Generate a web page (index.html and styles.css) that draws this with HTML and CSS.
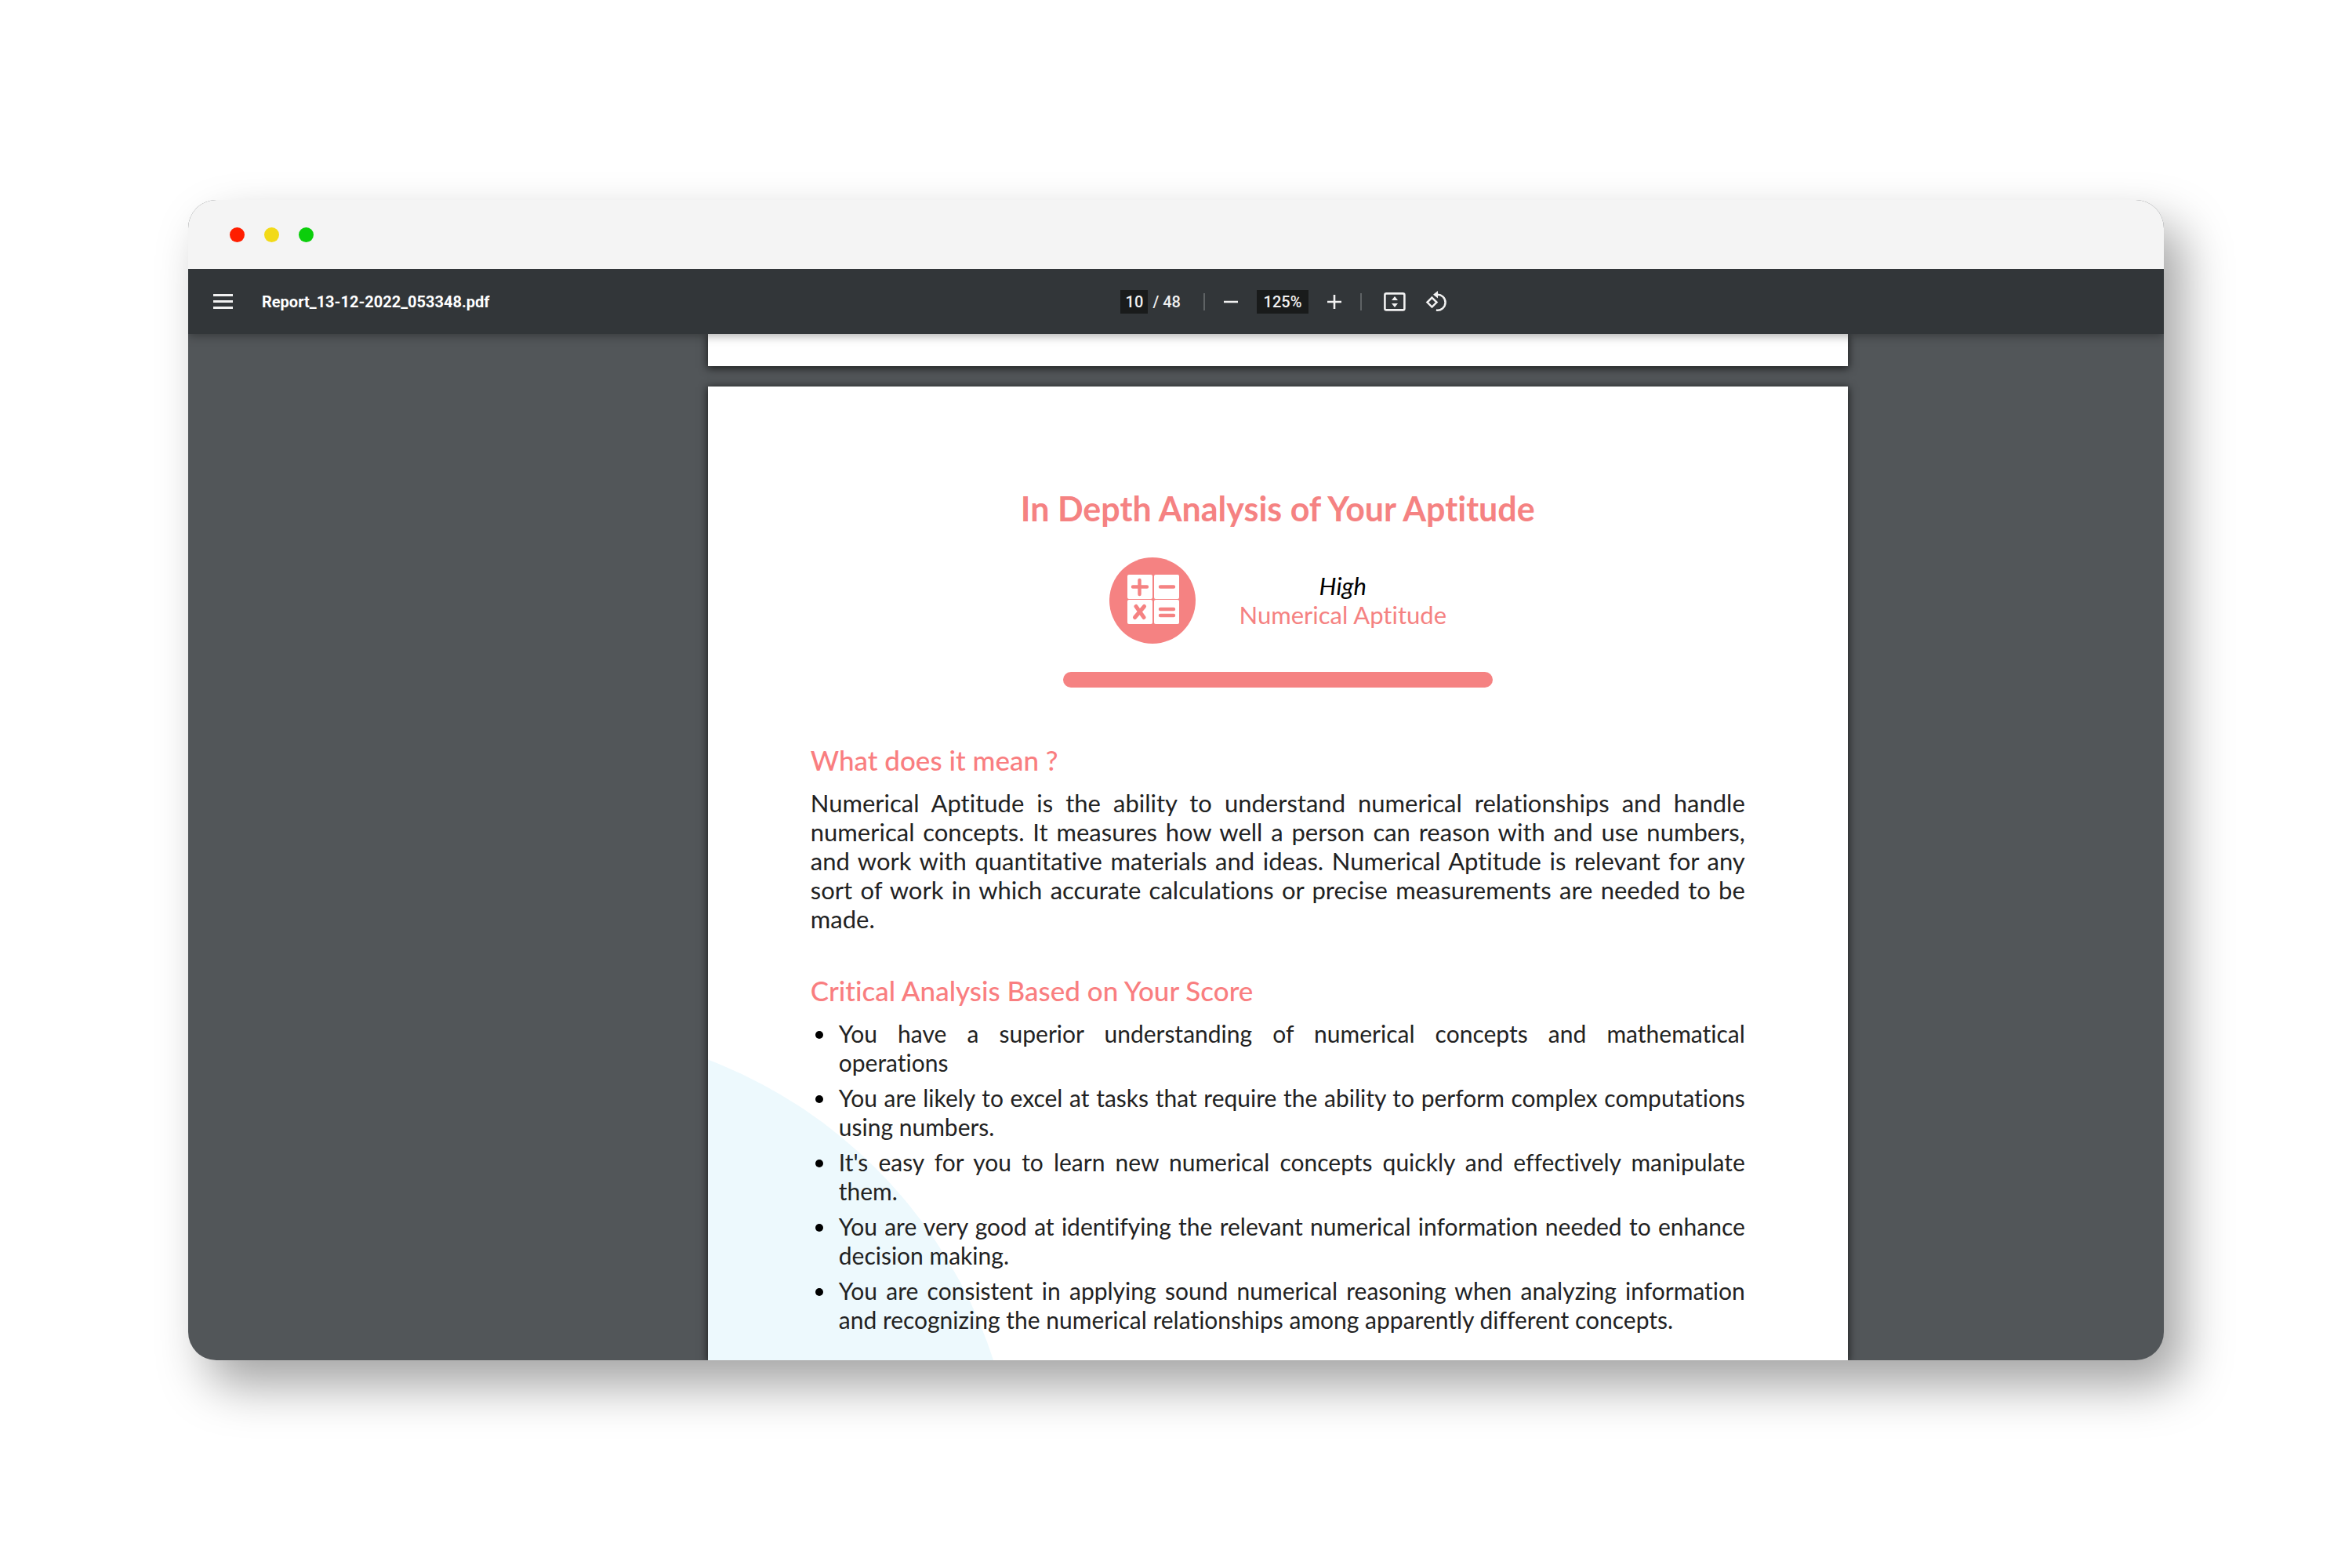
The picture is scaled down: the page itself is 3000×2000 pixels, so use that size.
FILE: index.html
```
<!DOCTYPE html>
<html lang="en">
<head>
<meta charset="utf-8">
<meta name="viewport" content="width=device-width, initial-scale=1">
<title>Report_13-12-2022_053348.pdf</title>
<link rel="stylesheet" href="styles.css">
</head>
<body>
<div class="window">
  <div class="titlebar">
    <span class="dot dot-red"></span>
    <span class="dot dot-yellow"></span>
    <span class="dot dot-green"></span>
  </div>

  <header class="toolbar">
    <div class="file">
      <button class="tool" type="button" aria-label="Menu">
        <svg width="25" height="19" viewBox="0 0 25 19"><path d="M0 1.5h25M0 9.5h25M0 17.5h25" stroke="currentColor" stroke-width="3"/></svg>
      </button>
      <span class="filename">Report_13-12-2022_053348.pdf</span>
    </div>
    <div class="controls">
      <div class="pager">
        <input class="field page-field" type="text" value="10" aria-label="Page number">
        <span>/ 48</span>
      </div>
      <span class="divider"></span>
      <button class="tool" type="button" aria-label="Zoom out">
        <svg width="18" height="18" viewBox="0 0 18 18"><path d="M0 9h18" stroke="currentColor" stroke-width="2.6"/></svg>
      </button>
      <input class="field zoom-field" type="text" value="125%" aria-label="Zoom level">
      <button class="tool" type="button" aria-label="Zoom in">
        <svg width="18" height="18" viewBox="0 0 18 18"><path d="M0 9h18M9 0v18" stroke="currentColor" stroke-width="2.6"/></svg>
      </button>
      <span class="divider"></span>
      <div class="view-tools">
        <button class="tool" type="button" aria-label="Fit to page">
          <svg width="28" height="24" viewBox="0 0 28 24"><rect x="1.4" y="1.4" width="25" height="21" rx="2" fill="none" stroke="currentColor" stroke-width="2.6"/><path d="M14 5l4 5h-8zM14 19l4-5h-8z" fill="currentColor"/></svg>
        </button>
        <button class="tool" type="button" aria-label="Rotate counterclockwise">
          <svg width="27" height="27" viewBox="0 0 27 27"><path d="M8.500 8.600l6 6-6 6-6-6z" fill="none" stroke="currentColor" stroke-width="2.5"/><path d="M14.500 4.800a10 10 0 1 1-.6 19.800" fill="none" stroke="currentColor" stroke-width="2.5"/><path d="M16 0v9.600L10 4.800z" fill="currentColor"/></svg>
        </button>
      </div>
    </div>
  </header>

  <main class="viewer">
    <div class="sheet sheet-previous"></div>
    <article class="sheet report">
      <h1 class="report-title">In Depth Analysis of Your Aptitude</h1>
      <div class="score">
        <svg class="score-icon" width="110" height="110" viewBox="0 0 110 110" aria-hidden="true">
          <circle cx="55" cy="55" r="55" fill="#f58282"/>
          <g fill="#fff">
            <rect x="23" y="22" width="32" height="31" rx="2"/>
            <rect x="57" y="22" width="32" height="31" rx="2"/>
            <rect x="23" y="54" width="32" height="31" rx="2"/>
            <rect x="57" y="54" width="32" height="31" rx="2"/>
          </g>
          <g stroke="#f58282" stroke-width="4.4" stroke-linecap="round">
            <path d="M30 37.500h18M38.500 29v18M65 37.500h17M65 66h17M65 74h17"/>
            <path d="M34 62.500l10 14M44.500 62.500l-12 14" stroke-width="5"/>
          </g>
        </svg>
        <div class="score-text">
          <em class="score-level">High</em>
          <span class="score-name">Numerical Aptitude</span>
        </div>
      </div>
      <div class="score-bar"></div>

      <section class="section">
        <h2>What does it mean ?</h2>
        <p>Numerical Aptitude is the ability to understand numerical relationships and handle numerical concepts. It measures how well a person can reason with and use numbers, and work with quantitative materials and ideas. Numerical Aptitude is relevant for any sort of work in which accurate calculations or precise measurements are needed to be made.</p>
      </section>

      <section class="section">
        <h2>Critical Analysis Based on Your Score</h2>
        <ul>
          <li><span><span class="full-line">You have a superior understanding of numerical concepts and mathematical</span> operations</span></li>
          <li><span>You are likely to excel at tasks that require the ability to perform complex computations using numbers.</span></li>
          <li><span>It's easy for you to learn new numerical concepts quickly and effectively manipulate them.</span></li>
          <li><span>You are very good at identifying the relevant numerical information needed to enhance decision making.</span></li>
          <li><span>You are consistent in applying sound numerical reasoning when analyzing information and recognizing the numerical relationships among apparently different concepts.</span></li>
        </ul>
      </section>
    </article>
  </main>
</div>
</body>
</html>
```
FILE: styles.css
```
* {
  box-sizing: border-box;
}

body {
  margin: 0;
  padding: 255px 8%;
  background: #fff;
  font-family: Lato, "Open Sans", sans-serif;
  font-variant-ligatures: none;
}

.window {
  border-radius: 36px;
  background: #525659;
  box-shadow: 24px 32px 62px rgba(0, 0, 0, .36);
  overflow: hidden;
}

/* Window title bar */

.titlebar {
  position: relative;
  z-index: 2;
  display: flex;
  align-items: center;
  gap: 25px;
  height: 88px;
  padding: 0 53px;
  background: #f4f4f4;
}

.dot {
  width: 19px;
  height: 19px;
  border-radius: 50%;
}

.dot-red { background: #ff1e00; }
.dot-yellow { background: #f2da18; }
.dot-green { background: #0bce0b; }

/* PDF toolbar */

.toolbar {
  position: relative;
  z-index: 1;
  display: grid;
  grid-template-columns: 47.2% 1fr;
  align-items: center;
  height: 83px;
  background: #323639;
  box-shadow: 0 2px 12px rgba(0, 0, 0, .35);
  color: #f1f1f1;
  font: 500 20px/28px Roboto, sans-serif;
}

.file {
  display: flex;
  align-items: center;
  gap: 37px;
  padding-left: 32px;
}

.filename {
  color: #fff;
  font-weight: 700;
}

.tool {
  display: block;
  padding: 0;
  border: 0;
  background: none;
  color: #f1f1f1;
}

.tool svg {
  display: block;
}

.controls {
  display: flex;
  align-items: center;
  gap: 24px;
}

.pager {
  display: flex;
  align-items: center;
  gap: 6px;
  padding-right: 5px;
}

.field {
  height: 30px;
  padding: 0;
  border: 0;
  background: #191b1b;
  color: #f1f1f1;
  font: inherit;
  text-align: center;
}

.page-field { width: 35px; }
.zoom-field { width: 66px; }

.divider {
  width: 2px;
  height: 22px;
  background: #5f6365;
}

.view-tools {
  display: flex;
  align-items: center;
  gap: 25px;
  padding-left: 4px;
}

/* Document */

.viewer {
  display: grid;
  grid-template-columns: 26.3% 1fr 16%;
  row-gap: 26px;
}

.sheet {
  grid-column: 2;
  background: #fff;
  box-shadow: 0 2px 10px 1px rgba(0, 0, 0, .65);
}

.sheet-previous {
  height: 41px;
}

.report {
  position: relative;
  display: flex;
  flex-direction: column;
  padding: 130px 131px 33px;
  overflow: hidden;
  color: #222;
  font-size: 31px;
  line-height: 37px;
}

.report::before {
  content: "";
  position: absolute;
  left: -832px;
  bottom: -802px;
  width: 1226px;
  height: 1226px;
  border-radius: 50%;
  background: #edf9fd;
}

.report > * {
  position: relative;
}

.report-title {
  margin: 0;
  color: #f58282;
  font-size: 43px;
  font-weight: 700;
  line-height: 52px;
  text-align: center;
}

.score {
  display: flex;
  justify-content: center;
  align-items: center;
  gap: 56px;
  margin-top: 36px;
}

.score-text {
  display: flex;
  flex-direction: column;
  align-items: center;
}

.score-level {
  color: #000;
}

.score-name {
  color: #f58282;
}

.score-bar {
  align-self: center;
  width: 46%;
  height: 20px;
  margin: 36px 0 20px;
  border-radius: 10px;
  background: #f58282;
}

.section {
  margin-top: 50px;
}

.section h2 {
  margin: 0 0 15px;
  color: #f97e80;
  font-size: 35px;
  font-weight: 500;
  line-height: 44px;
}

.section p,
.section ul {
  margin: 0;
  padding: 0;
  text-align: justify;
}

.section ul {
  display: grid;
  gap: 8px;
  font-size: 30px;
  list-style: none;
}

.section li {
  display: grid;
  grid-template-columns: 36px 1fr;
}

.section li::before {
  content: "";
  width: 10px;
  height: 10px;
  margin: 15px 0 0 6px;
  border-radius: 50%;
  background: #000;
}

.full-line {
  display: block;
  text-align-last: justify;
}
```
